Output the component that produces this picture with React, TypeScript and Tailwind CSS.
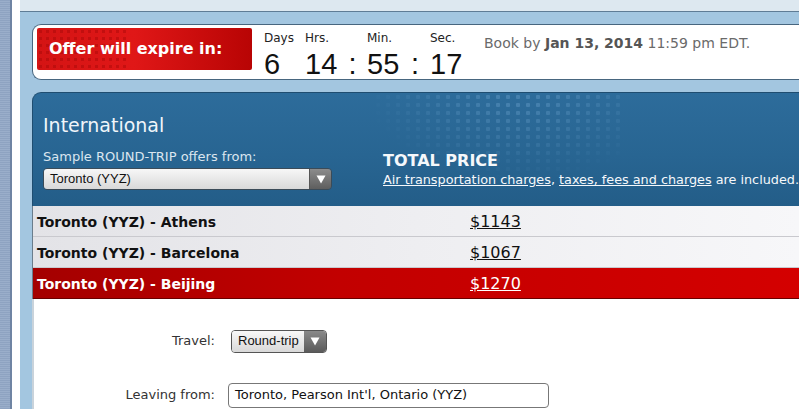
import React from 'react'

const verdana = { fontFamily: '"DejaVu Sans", Verdana, sans-serif' }
const arial = { fontFamily: '"Liberation Sans", Arial, sans-serif' }

const routes = [
  { name: 'Toronto (YYZ) - Athens', price: '$1143', active: false },
  { name: 'Toronto (YYZ) - Barcelona', price: '$1067', active: false },
  { name: 'Toronto (YYZ) - Beijing', price: '$1270', active: true },
]

function Arrow({ className }: { className?: string }) {
  return (
    <svg viewBox="0 0 10 9" className={className}>
      <path d="M0.5 0.5 L9.5 0.5 L5 8.5 Z" fill="#ffffff" />
    </svg>
  )
}

function Unit({ label, value, width }: { label: string; value: string; width: string }) {
  return (
    <div className={`flex flex-col ${width}`}>
      <span className="text-[12px] leading-[14px] text-[#222]" style={verdana}>
        {label}
      </span>
      <span className="text-[29px] leading-[30px] mt-[4px] text-[#111]" style={arial}>
        {value}
      </span>
    </div>
  )
}

function Colon({ width }: { width: string }) {
  return (
    <div className={`flex flex-col ${width}`}>
      <span className="h-[14px]" />
      <span className="text-[29px] leading-[30px] mt-[4px] text-[#111] text-center" style={arial}>
        :
      </span>
    </div>
  )
}

export default function App() {
  return (
    <div className="flex w-[799px] h-[409px] overflow-hidden bg-white">
      {/* left scroll strip */}
      <div className="w-[10px] h-full bg-[repeating-linear-gradient(180deg,#8ea3c1_0px,#8ea3c1_1px,#9aaeca_1px,#9aaeca_2px)]" />
      <div className="w-[2px] h-full bg-[#6f84a3]" />
      <div className="w-[8px] h-full bg-white" />

      <div className="flex-1 flex flex-col min-w-0">
        <div className="h-[12px] bg-[#dde8f0] border-b border-[#5f7c95]" />

        <div className="flex-1 bg-[#a3c6e0] pl-[12px] pt-[12px] flex flex-col">
          {/* countdown card */}
          <div className="h-[56px] rounded-l-[9px] border border-r-0 border-[#47667f] bg-white flex items-start pl-[4px] pt-[3px]">
            <div className="w-[215px] h-[42px] rounded-[2px] bg-[linear-gradient(90deg,#d41414_0%,#e01717_45%,#b80404_100%)] relative overflow-hidden flex items-center pl-[12px]">
              <div className="absolute inset-y-0 left-0 w-[90px] opacity-30 bg-[radial-gradient(circle,#8a0000_1.5px,transparent_2px)] bg-[length:7px_7px]" />
              <span className="relative text-white font-bold text-[16px]" style={verdana}>
                Offer will expire in:
              </span>
            </div>
            <div className="flex ml-[12px] pt-[3px]">
              <Unit label="Days" value="6" width="w-[41px]" />
              <Unit label="Hrs." value="14" width="w-[33px]" />
              <Colon width="w-[29px]" />
              <Unit label="Min." value="55" width="w-[33px]" />
              <Colon width="w-[30px]" />
              <Unit label="Sec." value="17" width="w-[54px]" />
              <div className="pt-[2px] text-[14px] text-[#6a6a6a] whitespace-nowrap" style={verdana}>
                Book by <b className="text-[#555]">Jan 13, 2014</b> 11:59 pm EDT.
              </div>
            </div>
          </div>

          {/* international panel */}
          <div className="mt-[12px] h-[114px] rounded-tl-[9px] border-l border-t border-[#1f4d70] bg-[linear-gradient(180deg,#2d6c9b_0%,#286592_55%,#235d88_100%)] relative overflow-hidden">
            <div className="absolute left-[330px] top-0 w-[260px] h-[90px] opacity-30 bg-[radial-gradient(circle,#7fb3dc_2px,transparent_2.5px)] bg-[length:10px_8px] [mask-image:radial-gradient(ellipse_at_60%_0%,black_10%,transparent_70%)]" />
            <div className="relative flex pl-[10px] pt-[20px]">
              <div className="w-[340px]">
                <div className="text-[19px] leading-[24px] text-[#f0f5fa]" style={verdana}>
                  International
                </div>
                <div className="mt-[12px] text-[13px] leading-[16px] text-[#dbe6ef]" style={verdana}>
                  Sample ROUND-TRIP offers from:
                </div>
                <div className="mt-[3px] w-[289px] h-[22px] rounded-[4px] border border-[#3b4b58] flex overflow-hidden">
                  <div className="flex-1 bg-[linear-gradient(180deg,#f7f7f7_0%,#d9d9d9_100%)] flex items-center pl-[6px] text-[13px] text-[#111]" style={arial}>
                    Toronto (YYZ)
                  </div>
                  <div className="w-[22px] bg-[linear-gradient(180deg,#8c8c8c_0%,#5e5e5e_100%)] border-l border-[#555] flex items-center justify-center">
                    <Arrow className="w-[10px] h-[9px]" />
                  </div>
                </div>
              </div>
              <div className="pt-[39px] text-[#f5f8fb]" style={verdana}>
                <div className="text-[16px] leading-[18px] font-bold">TOTAL PRICE</div>
                <div className="text-[12.8px] leading-[17px] mt-[1px] whitespace-nowrap">
                  <span className="underline">Air transportation charges</span>,{' '}
                  <span className="underline">taxes, fees and charges</span> are included.
                </div>
              </div>
            </div>
          </div>

          {/* routes */}
          <div className="border-l border-[#6a7d8c]">
            {routes.map((r) => (
              <div
                key={r.name}
                className={`h-[31px] flex items-center border-b ${
                  r.active
                    ? 'bg-[linear-gradient(90deg,#a40000_0%,#c20000_40%,#d40000_100%)] border-[#6a0000] text-white'
                    : 'bg-[linear-gradient(90deg,#e3e3e7_0%,#eeeef1_50%,#f7f7f9_100%)] border-[#c9c9ce] text-[#111]'
                }`}
              >
                <div className="w-[437px] pl-[4px] pt-[2px] text-[14px] font-bold" style={verdana}>
                  {r.name}
                </div>
                <div className="pt-[2px] text-[16px] underline" style={verdana}>
                  {r.price}
                </div>
              </div>
            ))}
          </div>

          {/* form */}
          <div className="flex-1 bg-white border-l-2 border-[#c9d3db] pt-[30px]">
            <div className="flex items-center h-[24px]">
              <div className="w-[181px] text-right text-[13px] text-[#333]" style={verdana}>
                Travel:
              </div>
              <div className="ml-[16px] w-[96px] h-[23px] rounded-[4px] border border-[#555] flex overflow-hidden">
                <div className="flex-1 bg-[linear-gradient(180deg,#f8f8f8_0%,#d8d8d8_100%)] flex items-center pl-[6px] text-[13px] text-[#111]" style={arial}>
                  Round-trip
                </div>
                <div className="w-[22px] bg-[linear-gradient(180deg,#8a8a8a_0%,#5a5a5a_100%)] flex items-center justify-center">
                  <Arrow className="w-[10px] h-[9px]" />
                </div>
              </div>
            </div>
            <div className="flex items-center h-[26px] mt-[29px]">
              <div className="w-[181px] text-right text-[13px] text-[#333]" style={verdana}>
                Leaving from:
              </div>
              <div className="ml-[13px] w-[321px] h-[25px] rounded-[4px] border border-[#777] flex items-center pl-[6px] text-[13px] text-[#111]" style={verdana}>
                Toronto, Pearson Int'l, Ontario (YYZ)
              </div>
            </div>
          </div>
        </div>
      </div>
    </div>
  )
}
